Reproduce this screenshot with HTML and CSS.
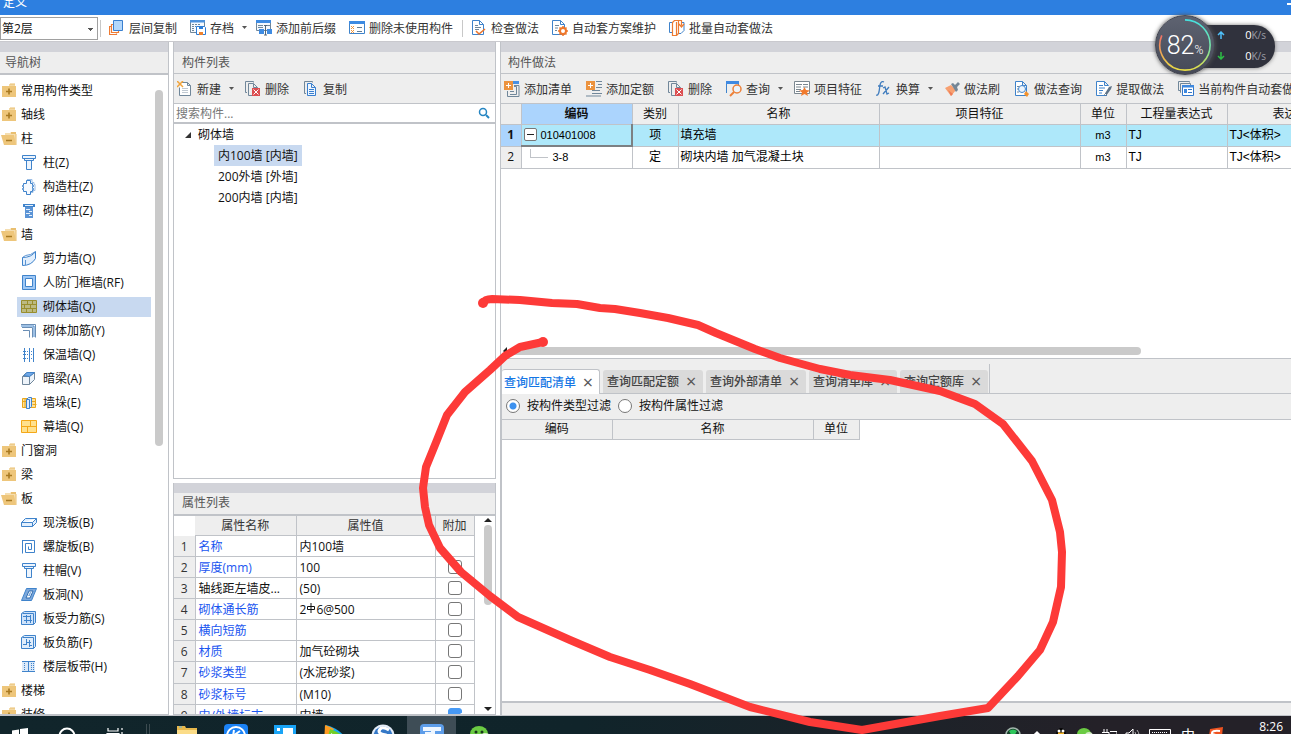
FILE: index.html
```html
<!DOCTYPE html>
<html lang="zh-CN">
<head>
<meta charset="utf-8">
<title>定义</title>
<link rel="stylesheet" href="styles.css">
</head>
<body>
<svg class="sprite" aria-hidden="true">
  <symbol id="folder" viewBox="0 0 16 16"><path d="M8 1h6v3h-6z" fill="#f3d9a4"/><path d="M9 .5h5v1h-5z" fill="#e9bf70"/><path d="M1 3h14v11h-14z" fill="#eec67b"/><path d="M8 5.500v6M5 8.500h6" stroke="#a87a22" stroke-width="1.600"/></symbol>
  <symbol id="open" viewBox="0 0 16 16"><path d="M4 2h5l1-1h5v12h-11z" fill="#f5deb0"/><path d="M10 1h5v2h-5z" fill="#e9bf70"/><path d="M15 3v11" stroke="#e9bf70"/><path d="M0 4h13l2 10h-12z" fill="#eec67b"/><path d="M5 9.500h6" stroke="#a87a22" stroke-width="1.500"/></symbol>
  <symbol id="column" viewBox="0 0 16 16"><path d="M1.500.5h13v3h-13zM3.500 3.500h9v2h-9zM5.500 5.500h5v9h-5z" fill="#eef5fd" stroke="#3f83cb"/></symbol>
  <symbol id="struct" viewBox="0 0 16 16"><path d="M6 .5h5v3h2v2h1v6h-2v2h-2" fill="none" stroke="#9dbfe6"/><path d="M5.500 1.500h4v3h2v2h1v1h-1v2h1v1h-1v2h-2v3h-4v-3h-3v-2h-1v-1h1v-2h-1v-1h1v-2h3z" fill="#f5f9fe" stroke="#3f83cb"/></symbol>
  <symbol id="brickcol" viewBox="0 0 16 16"><path d="M2 1h12v3h-12z" fill="#3f83cb"/><path d="M4 4h8v11h-8z" fill="#5b94d6"/><path d="M5 6.500h4M8 8.500h3M5 10.500h4M8 12.500h3M4 2.500h8" stroke="#e5f0fc"/></symbol>
  <symbol id="curve" viewBox="0 0 16 16"><path d="M1.500 6.500q9 0 13-6v7q-4 7-13 7z" fill="#e2effd" stroke="#3f83cb"/><path d="M1.500 6.500l3-2q5 0 10-4M4.500 9v5" fill="none" stroke="#5a94d4"/></symbol>
  <symbol id="frame" viewBox="0 0 16 16"><path d="M1.500.5h13v14h-13z" fill="#9fc8f5" stroke="#3f83cb"/><path d="M4.500 3.500h7v8h-7z" fill="#fff" stroke="#3f83cb"/></symbol>
  <symbol id="brick" viewBox="0 0 16 16"><path d="M.5 1.500h15v12h-15zM.5 5.500h15M.5 9.500h15M6.500 1.500v4M11.500 1.500v4M3.500 5.500v4M9.500 5.500v4M5.500 9.500v4M11.500 9.500v4" fill="#bcba82" stroke="#998e2d"/></symbol>
  <symbol id="rebar" viewBox="0 0 16 16"><path d="M0 1.500h14.500v13M1 4.500h10.500v10M2 7.500h6.500v7" fill="none" stroke="#6a8eb5"/><path d="M0 3h13v11" fill="none" stroke="#3f83cb"/></symbol>
  <symbol id="insul" viewBox="0 0 16 16"><path d="M3.500 1v14M8.500 1v14M12.500 1v14" stroke="#3f83cb"/><path d="M2 4.500h12M2 7.500h12M2 11.500h12" stroke="#3f83cb" stroke-dasharray="1 1"/></symbol>
  <symbol id="beam" viewBox="0 0 16 16"><path d="M1.500 5.500l4-4h8v7l-5 5h-7zM1.500 5.500h7v8M8.500 5.500l5-4" fill="#eef4fa" stroke="#71879b"/><path d="M3 4.500l3-3h7.500l-5 4z" fill="#72a9e7" stroke="#3f83cb"/></symbol>
  <symbol id="pier" viewBox="0 0 16 16"><path d="M1.500 3.500h13v9h-13zM1 6.500h14M11.500 9.500h4M4 3v10" fill="#ffe19a" stroke="#e9a71b"/><path d="M5.500 4.500l2-2h3v9l-2 2h-3zM5.500 4.500h3v9" fill="#dceaff" stroke="#3f83cb"/></symbol>
  <symbol id="curtain" viewBox="0 0 16 16"><path d="M.5 1.500h15v12h-15zM.5 7.500h15M9.500 1.500v6M6.500 7.500v6" fill="#ffe18e" stroke="#f4a819"/></symbol>
  <symbol id="slab" viewBox="0 0 16 16"><path d="M.5 7.500l4-4h11v4l-4 4h-11zM.5 7.500h11l4-4M11.500 7.500v4" fill="#e1effe" stroke="#3f83cb"/></symbol>
  <symbol id="spiral" viewBox="0 0 16 16"><path d="M1.500 1v13.500M1 1.500h12.500v12h-9v-9h6v6h-3v-3" fill="none" stroke="#3f83cb"/></symbol>
  <symbol id="hole" viewBox="0 0 16 16"><path d="M.5 13.500l5-12h10l-5 12z" fill="#7ca8dc" stroke="#3f83cb"/><path d="M5 11l3-7h4l-3 7z" fill="#fff" stroke="#326fb1"/><path d="M7 9l2-4h1l-1 4z" fill="#7ca8dc"/></symbol>
  <symbol id="barS" viewBox="0 0 16 16"><path d="M3.500.5h11v11l-2 2h-12v-11z" fill="#cfe3fa" stroke="#3f83cb"/><path d="M1.500 2.500h11v11" fill="none" stroke="#3f83cb"/><path d="M2 5.500h8M3 9.500h8M5.500 4v8M9.500 4v8" stroke="#3f83cb"/></symbol>
  <symbol id="barF" viewBox="0 0 16 16"><path d="M3.500.5h11v11l-2 2h-12v-11z" fill="#e0edfb" stroke="#3f83cb"/><path d="M1.500 2.500h11v11M5.500 4v6M8.500 5v7M2 9.500h4M5 7.500h5M8 10.500h3" fill="none" stroke="#3f83cb"/></symbol>
  <symbol id="strip" viewBox="0 0 16 16"><path d="M1 2h13v11H1z" fill="#dbe9f9"/><path d="M1 2.500h13M1 12.500h13M7.500 2v11" stroke="#3f83cb"/><path d="M3.500 4v8M10.500 4v8M12.500 4v8" stroke="#3f83cb" stroke-dasharray="1 1"/></symbol>
  <symbol id="layers" viewBox="0 0 16 16"><path d="M4.500 4.500h-2v8h7v-2M3 6.500H.5v8h7v-1" fill="none" stroke="#ee7b34" stroke-width="1.200"/><path d="M4.500.5h9v10h-9z" fill="#b3d7fb" stroke="#397fcf"/></symbol>
  <symbol id="save" viewBox="0 0 16 16"><path d="M.5.5h14v12H.5z" fill="#f6fafe" stroke="#70879a"/><path d="M0 0h15v2.500H0z" fill="#4e93dd"/><path d="M2 4.500h9M2 6.500h4M2 8.500h3M2 10.500h3" stroke="#70879a" stroke-dasharray="2 1"/><path d="M6.500 6.500h8l1 1v7h-9z" fill="#fff" stroke="#2c7dd7"/><path d="M9 7h4v2H9z" fill="#2c7dd7"/><path d="M9 12h4v3H9z" fill="#ee822f"/></symbol>
  <symbol id="prefix" viewBox="0 0 16 16"><path d="M.5 1.500h14v9H.5z" fill="#f4f8fc" stroke="#70879a"/><path d="M0 0h15v3H0z" fill="#3e8be2"/><path d="M2 5.500h5M2 7.500h5M10 5.500h4" stroke="#70879a"/><path d="M3 9h5v5H3zM11 9h5v5h-5z" fill="#3e8be2"/><path d="M9.500 5v10M8 5.500h3M8 15h3" stroke="#526779"/></symbol>
  <symbol id="unused" viewBox="0 0 16 16"><path d="M.5 1.500h15v12H.5z" fill="#fff" stroke="#3e83cb"/><path d="M0 1h16v3H0z" fill="#3e8be2"/><path d="M2 6l3 3m0-3L2 9m0 1l3 3m0-3l-3 3" stroke="#ef943a"/><path d="M8 7.500h5M8 11.500h5" stroke="#657c91"/></symbol>
  <symbol id="check" viewBox="0 0 16 16"><path d="M1.500.5h7l4 4v10h-11zM8.500.5v4h4" fill="#fff" stroke="#3f83cb"/><path d="M4 5.500h3M4 7.500h6M4 9.500h4" stroke="#70879a"/><path d="M5 11l3 3 6-5" fill="none" stroke="#ec752b" stroke-width="1.600"/></symbol>
  <symbol id="plan" viewBox="0 0 16 16"><path d="M.5.500h8l4 4v10h-12zM8.500.5v4h4" fill="#fff" stroke="#3f83cb"/><path d="M3 5.500h4M3 8h3M3 10.500h2" stroke="#70879a"/><circle cx="11" cy="11" r="3" fill="#fff" stroke="#ef772a" stroke-width="2"/><path d="M11 6v2M11 14v2M6 11h2M14 11h2M7.500 7.500L9 9M13 13l1.500 1.500M7.500 14.500L9 13M13 9l1.500-1.500" stroke="#ef772a" stroke-width="1.500"/></symbol>
  <symbol id="batch" viewBox="0 0 16 16"><path d="M3.500 2.500h-3v10h3M12 2.500h3v8l-3 3H9" fill="none" stroke="#3f83cb"/><path d="M3.500 2.500l2-2h4v13l-2 2h-4zM7.500 2v13M9.500.5h3v5M10 4l2.500 3L15 4" fill="none" stroke="#ed7b31" stroke-width="1.200"/></symbol>
  <symbol id="new" viewBox="0 0 16 16"><path d="M4.500 1.500h6l3 3v10h-11v-8M10.500 1.500v3h3" fill="#fff" stroke="#70879a"/><path d="M5 7.500h6M5 9.500h6M5 11.500h6" stroke="#c0c9d2"/><path d="M0 0l6 6m0-6L0 6" stroke="#f2a43b" stroke-width="1.500"/></symbol>
  <symbol id="delete" viewBox="0 0 16 16"><path d="M2 11.500H.5V.5h8v1M8 14.500H3.500v-12h5l4 4v1M8.500 2.500v4h4" fill="none" stroke="#71879a"/><path d="M7 7h8v8H7z" fill="#dc4e51"/><path d="M8.500 8.500l5 5m0-5l-5 5" stroke="#fff"/></symbol>
  <symbol id="copy" viewBox="0 0 16 16"><path d="M3 12.500H1.500V.5h8v1" fill="none" stroke="#70879a"/><path d="M4.500 2.500h4l4 4v8h-8zM8.500 2.500v4h4M6 8.500h5M6 10.500h5M6 12.500h5" fill="#eef6ff" stroke="#397fcf"/></symbol>
  <symbol id="addlist" viewBox="0 0 16 16"><path d="M10 1.500h5M10 4.500h5v11H3.500V10" fill="none" stroke="#70879a"/><path d="M9 0h6v3H9z" fill="#4790e4"/><path d="M10 5.500h2.500v8H6M6 10.500h4" fill="none" stroke="#70879a"/><path d="M0 0h9v9H0z" fill="#ec933f"/><path d="M4.500 2v5M2 4.500h5" stroke="#fff"/></symbol>
  <symbol id="addquota" viewBox="0 0 16 16"><path d="M10 .5h6M12 3.500h4M10 6.500h6M6 9.500h8M6 12.500h10M0 15h15" stroke="#70879a"/><path d="M0 0h9v9H0z" fill="#ec933f"/><path d="M4.500 2v5M2 4.500h5" stroke="#fff"/></symbol>
  <symbol id="query" viewBox="0 0 16 16"><path d="M.5 12V.5h12V4" fill="none" stroke="#3f83cb"/><path d="M0 0h13v3H0z" fill="#3f8ae2"/><circle cx="11" cy="8" r="4" fill="#edf4fa" stroke="#ed8139" stroke-width="1.500"/><path d="M8 11l-4 4" stroke="#ed8139" stroke-width="2"/></symbol>
  <symbol id="feature" viewBox="0 0 16 16"><path d="M.5.5h15v12H.5z" fill="#fff" stroke="#7b8790"/><path d="M2 3.500h6M9 3.500h5M2 6h5M9 6h5M2 8.500h5M2 10.500h4" stroke="#7b8790"/><path d="M10.500 6l1.500 3 4 .5-3 2 1 3.500-3.500-2L7 15l1-3.500-3-2 4-.5z" fill="#f17a2d"/></symbol>
  <symbol id="fx" viewBox="0 0 16 16"><path d="M8 1Q5-.5 4 4L3 11Q2 15 0 14M2 5h5M7 7l2-1 2 7 2-1M13 6L7 13" fill="none" stroke="#417dbe" stroke-width="1.300"/></symbol>
  <symbol id="brush" viewBox="0 0 16 16"><path d="M1 7l6-3 5 5-5 6z" fill="#f7a071"/><path d="M7 3l2-1 2 2 3-3 2 2-3 3 1 3-2 2z" fill="#748696"/><path d="M4 9l3 6 2-2" fill="#ef7c57"/></symbol>
  <symbol id="docquery" viewBox="0 0 16 16"><path d="M1.500.5h7l4 4v10h-11zM8.500.5v4h4" fill="#fff" stroke="#3f83cb"/><circle cx="8" cy="8" r="3.500" fill="#edf5fd" stroke="#3f83cb"/><path d="M3 5.500h2M3 8h1M3 11h2" stroke="#70879a"/><path d="M12 10l3 3-2 3-3-3z" fill="#f3922d"/></symbol>
  <symbol id="extract" viewBox="0 0 16 16"><path d="M11 14.500H.5V.5h8l4 4M8.500.5v4h4" fill="#fff" stroke="#3f83cb"/><path d="M3 4.500h4M3 7h6M3 9.500h4M3 12h3" stroke="#3f83cb"/><path d="M8 14l5-8 3-1-1 3-5 7z" fill="#5e7388"/><path d="M8 12l2 2" stroke="#fff"/></symbol>
  <symbol id="current" viewBox="0 0 16 16"><path d="M3 9.500H.5V.5h11v1M3 11.500h-.5v-9h10V4" fill="none" stroke="#70879a"/><path d="M4.500 4.500h11v10h-11z" fill="#fff" stroke="#3478ca"/><path d="M4 4h12v2.500H4zM6 8h3v4H6z" fill="#3d88df"/><path d="M10 8.500h4M10 11.500h4" stroke="#3478ca"/></symbol>
  <symbol id="arrow" viewBox="0 0 7 4"><path d="M1 0h5L3.500 3z" fill="#555"/></symbol>
</svg>

<div class="window">
  <header class="titlebar"><span>定义</span><button class="minimise" aria-label="最小化"></button></header>

  <div class="main-tools">
    <select class="floor" aria-label="楼层"><option>第2层</option></select>
    <i class="sep"></i>
    <button class="tool"><svg><use href="#layers"/></svg>层间复制</button>
    <button class="tool drop"><svg><use href="#save"/></svg>存档<svg class="arrow"><use href="#arrow"/></svg></button>
    <button class="tool"><svg><use href="#prefix"/></svg>添加前后缀</button>
    <button class="tool"><svg><use href="#unused"/></svg>删除未使用构件</button>
    <i class="sep"></i>
    <button class="tool"><svg><use href="#check"/></svg>检查做法</button>
    <button class="tool"><svg><use href="#plan"/></svg>自动套方案维护</button>
    <button class="tool"><svg><use href="#batch"/></svg>批量自动套做法</button>
  </div>

  <main class="workspace">
    <nav class="nav-panel">
      <h2 class="heading thick">导航树</h2>
      <div class="nav-body">
        <ul class="nav-tree">
          <li><svg><use href="#folder"/></svg>常用构件类型</li>
          <li><svg><use href="#folder"/></svg>轴线</li>
          <li><svg><use href="#open"/></svg>柱</li>
          <li class="leaf"><svg><use href="#column"/></svg>柱(Z)</li>
          <li class="leaf"><svg><use href="#struct"/></svg>构造柱(Z)</li>
          <li class="leaf"><svg><use href="#brickcol"/></svg>砌体柱(Z)</li>
          <li><svg><use href="#open"/></svg>墙</li>
          <li class="leaf"><svg><use href="#curve"/></svg>剪力墙(Q)</li>
          <li class="leaf"><svg><use href="#frame"/></svg>人防门框墙(RF)</li>
          <li class="leaf selected"><svg><use href="#brick"/></svg>砌体墙(Q)</li>
          <li class="leaf"><svg><use href="#rebar"/></svg>砌体加筋(Y)</li>
          <li class="leaf"><svg><use href="#insul"/></svg>保温墙(Q)</li>
          <li class="leaf"><svg><use href="#beam"/></svg>暗梁(A)</li>
          <li class="leaf"><svg><use href="#pier"/></svg>墙垛(E)</li>
          <li class="leaf"><svg><use href="#curtain"/></svg>幕墙(Q)</li>
          <li><svg><use href="#folder"/></svg>门窗洞</li>
          <li><svg><use href="#folder"/></svg>梁</li>
          <li><svg><use href="#open"/></svg>板</li>
          <li class="leaf"><svg><use href="#slab"/></svg>现浇板(B)</li>
          <li class="leaf"><svg><use href="#spiral"/></svg>螺旋板(B)</li>
          <li class="leaf"><svg><use href="#column"/></svg>柱帽(V)</li>
          <li class="leaf"><svg><use href="#hole"/></svg>板洞(N)</li>
          <li class="leaf"><svg><use href="#barS"/></svg>板受力筋(S)</li>
          <li class="leaf"><svg><use href="#barF"/></svg>板负筋(F)</li>
          <li class="leaf"><svg><use href="#strip"/></svg>楼层板带(H)</li>
          <li><svg><use href="#folder"/></svg>楼梯</li>
          <li><svg><use href="#folder"/></svg>装修</li>
        </ul>
        <div class="nav-scroll"><i></i></div>
      </div>
    </nav>

    <div class="middle">
      <section class="list-panel">
        <h2 class="heading">构件列表</h2>
        <div class="tools">
          <button class="tool drop"><svg><use href="#new"/></svg>新建<svg class="arrow"><use href="#arrow"/></svg></button>
          <button class="tool"><svg><use href="#delete"/></svg>删除</button>
          <button class="tool"><svg><use href="#copy"/></svg>复制</button>
        </div>
        <div class="search">
          <input type="text" aria-label="搜索构件" placeholder="搜索构件...">
          <svg viewBox="0 0 12 12"><circle cx="5" cy="5" r="3.500" fill="none" stroke="#2585c2" stroke-width="1.500"/><path d="M8 8l3 3" stroke="#2585c2" stroke-width="2"/></svg>
        </div>
        <ul class="parts">
          <li class="root"><svg viewBox="0 0 8 8"><path d="M7 1v6H1z" fill="#333"/></svg>砌体墙</li>
          <li><span class="selected">内100墙 [内墙]</span></li>
          <li><span>200外墙 [外墙]</span></li>
          <li><span>200内墙 [内墙]</span></li>
        </ul>
      </section>

      <section class="prop-panel">
        <h2 class="heading thick">属性列表</h2>
        <div class="prop-body">
          <table class="props">
            <thead><tr><th class="n"></th><th class="name">属性名称</th><th class="value">属性值</th><th class="extra">附加</th></tr></thead>
            <tbody>
              <tr><th>1</th><td class="link">名称</td><td>内100墙</td><td></td></tr>
              <tr><th>2</th><td class="link">厚度(mm)</td><td>100</td><td><input type="checkbox" aria-label="附加 厚度"></td></tr>
              <tr><th>3</th><td>轴线距左墙皮...</td><td>(50)</td><td><input type="checkbox" aria-label="附加 轴线距左墙皮"></td></tr>
              <tr><th>4</th><td class="link">砌体通长筋</td><td>2<svg class="bar" viewBox="0 0 10 11" role="img" aria-label="钢筋"><path d="M1.500 3.500h7v3h-7zM5 0v10" fill="none" stroke="#111"/></svg>6@500</td><td><input type="checkbox" aria-label="附加 砌体通长筋"></td></tr>
              <tr><th>5</th><td class="link">横向短筋</td><td></td><td><input type="checkbox" aria-label="附加 横向短筋"></td></tr>
              <tr><th>6</th><td class="link">材质</td><td>加气砼砌块</td><td><input type="checkbox" aria-label="附加 材质"></td></tr>
              <tr><th>7</th><td class="link">砂浆类型</td><td>(水泥砂浆)</td><td><input type="checkbox" aria-label="附加 砂浆类型"></td></tr>
              <tr><th>8</th><td class="link">砂浆标号</td><td>(M10)</td><td><input type="checkbox" aria-label="附加 砂浆标号"></td></tr>
              <tr><th>9</th><td class="link">内/外墙标志</td><td>内墙</td><td><input type="checkbox" checked aria-label="附加 内/外墙标志"></td></tr>
            </tbody>
          </table>
          <div class="prop-scroll">
            <svg viewBox="0 0 8 4"><path d="M0 4l4-4 4 4z" fill="#222"/></svg>
            <i></i>
            <svg viewBox="0 0 8 4"><path d="M0 0l4 4 4-4z" fill="#222"/></svg>
          </div>
        </div>
      </section>
    </div>

    <div class="right">
      <section class="method-panel">
        <h2 class="heading">构件做法</h2>
        <div class="tools">
          <button class="tool"><svg><use href="#addlist"/></svg>添加清单</button>
          <button class="tool"><svg><use href="#addquota"/></svg>添加定额</button>
          <button class="tool"><svg><use href="#delete"/></svg>删除</button>
          <button class="tool drop"><svg><use href="#query"/></svg>查询<svg class="arrow"><use href="#arrow"/></svg></button>
          <button class="tool"><svg><use href="#feature"/></svg>项目特征</button>
          <button class="tool drop"><svg><use href="#fx"/></svg>换算<svg class="arrow"><use href="#arrow"/></svg></button>
          <button class="tool"><svg><use href="#brush"/></svg>做法刷</button>
          <button class="tool"><svg><use href="#docquery"/></svg>做法查询</button>
          <button class="tool"><svg><use href="#extract"/></svg>提取做法</button>
          <button class="tool"><svg><use href="#current"/></svg>当前构件自动套做法</button>
        </div>
        <table class="methods">
          <colgroup><col class="w21"><col class="w111"><col class="w46"><col class="w201"><col class="w201"><col class="w46"><col class="w101"><col class="w151"></colgroup>
          <thead><tr><th></th><th class="active">编码</th><th>类别</th><th>名称</th><th>项目特征</th><th>单位</th><th>工程量表达式</th><th>表达式说明</th></tr></thead>
          <tbody>
            <tr class="current"><th>1</th><td class="code"><div><button class="fold" aria-label="折叠"></button>010401008</div></td><td class="mid">项</td><td>填充墙</td><td></td><td class="mid small">m3</td><td>TJ</td><td>TJ&lt;体积&gt;</td></tr>
            <tr><th>2</th><td class="code"><div><i class="branch"></i>3-8</div></td><td class="mid">定</td><td>砌块内墙 加气混凝土块</td><td></td><td class="mid small">m3</td><td>TJ</td><td>TJ&lt;体积&gt;</td></tr>
          </tbody>
        </table>
        <div class="h-scroll"><svg viewBox="0 0 4 8"><path d="M4 0v8L0 4z" fill="#222"/></svg><i></i></div>
      </section>

      <section class="query-panel">
        <div class="tabs" role="tablist">
          <button class="tab on" role="tab" aria-selected="true">查询匹配清单<b>×</b></button>
          <button class="tab" role="tab">查询匹配定额<b>×</b></button>
          <button class="tab" role="tab">查询外部清单<b>×</b></button>
          <button class="tab" role="tab">查询清单库<b>×</b></button>
          <button class="tab" role="tab">查询定额库<b>×</b></button>
        </div>
        <div class="filters">
          <label><input type="radio" name="filter" checked>按构件类型过滤</label>
          <label><input type="radio" name="filter">按构件属性过滤</label>
        </div>
        <div class="results">
          <table class="result-table">
            <thead><tr><th class="w111">编码</th><th class="w201">名称</th><th class="w46">单位</th></tr></thead>
          </table>
        </div>
        <div class="status"></div>
      </section>
    </div>
  </main>

  <footer class="taskbar">
    <div class="system">
      <button aria-label="开始"><svg viewBox="0 0 18 18"><path d="M1 3.500l7-1v6H1zM9 2l8-1v7.500H9zM1 9.500h7v6l-7-1zM9 9.500h8V17l-8-1z" fill="#fff"/></svg></button>
      <button aria-label="搜索"><svg viewBox="0 0 18 18"><circle cx="9" cy="9" r="7.500" fill="none" stroke="#fff" stroke-width="2"/></svg></button>
      <button aria-label="任务视图"><svg viewBox="0 0 18 18"><path d="M2 1v3h10V1M2 17v-3h10v3M1 6.500h12v5H1zM16 1v2M16 5v7M16 14v3" fill="none" stroke="#fff" stroke-width="1.200"/></svg></button>
    </div>
    <i class="grip"></i>
    <div class="apps">
      <button aria-label="文件资源管理器"><svg viewBox="0 0 24 24"><path d="M2 2h8l1 2h11v18H2z" fill="#e7b84c"/><path d="M2 6h20v16H2z" fill="#fbdc88"/><path d="M4 3h3" stroke="#5fb2df"/></svg></button>
      <button aria-label="酷狗"><svg viewBox="0 0 24 24"><rect width="24" height="24" rx="4" fill="#1b82f5"/><circle cx="12" cy="12" r="9" fill="none" stroke="#fff" stroke-width="2"/><path d="M10 6L8 18M16 7l-7 5 5 6" fill="none" stroke="#fff" stroke-width="2"/></svg></button>
      <button aria-label="桌面工具"><svg viewBox="0 0 24 24"><path d="M1 1h22v22H1z" fill="#19a4f6"/><path d="M4 4h3v3H4zM10 4h10v10H10zM4 10h3v3H4z" fill="#fff"/></svg></button>
      <button aria-label="播放器"><svg viewBox="0 0 24 24"><path d="M4 1q12 3 19 12L4 22z" fill="#18aaf0"/><path d="M3 1q6 2 9 4L2 20z" fill="#ff9c22"/><path d="M8 5q9 3 14 8L3 23z" fill="#73cf27"/><path d="M9 9l6 4-6 4z" fill="#fff"/></svg></button>
      <button aria-label="浏览器"><svg viewBox="0 0 24 24"><circle cx="12" cy="12" r="11.500" fill="#e4edf8"/><circle cx="12" cy="12" r="9.500" fill="#3478c7"/><path d="M18 6Q10 1 8 7q0 3 7 4 5 3 0 7-4 2-9-1" fill="none" stroke="#fff" stroke-width="3"/></svg></button>
      <button class="running" aria-label="定义"><svg viewBox="0 0 24 24"><rect width="24" height="24" rx="4" fill="#5d9de9"/><path d="M3 5h18M13 5v14M5 10h7" stroke="#eef6ff" stroke-width="4"/></svg></button>
      <button aria-label="微信"><svg viewBox="0 0 24 24"><ellipse cx="10" cy="10" rx="9" ry="8" fill="#6bcb43"/><ellipse cx="16" cy="15" rx="7" ry="6" fill="#d6edc9"/><circle cx="7" cy="8" r="1.500" fill="#17351b"/><circle cx="13" cy="8" r="1.500" fill="#17351b"/></svg></button>
    </div>
    <div class="tray">
      <svg viewBox="0 0 16 16"><circle cx="8" cy="8" r="7" fill="#173f2b" stroke="#a2b6ac" stroke-width="1.500"/><path d="M4 4q4-3 8 0l-4 7z" fill="#2ec65b"/></svg>
      <svg viewBox="0 0 16 16"><path d="M4 9l4-4 4 4" fill="none" stroke="#fff" stroke-width="1.500"/></svg>
      <svg viewBox="0 0 16 16"><ellipse cx="8" cy="8" rx="5" ry="7" fill="#050505"/><circle cx="6" cy="4" r="1.500" fill="#fff"/><circle cx="10" cy="4" r="1.500" fill="#fff"/><path d="M5 6.500h6" stroke="#f2b227" stroke-width="2"/></svg>
      <svg viewBox="0 0 16 16"><ellipse cx="7" cy="7" rx="7" ry="6" fill="#6bcb43"/><ellipse cx="12" cy="9" rx="4" ry="4" fill="#d6edc9"/></svg>
      <svg viewBox="0 0 16 16"><path d="M3 2v4M6 2v4M1 5.500h7v5M9 4.500h7v8H3" fill="none" stroke="#fff"/></svg>
      <svg viewBox="0 0 16 16"><path d="M1 6h3l4-4v12l-4-4H1z" fill="none" stroke="#fff"/><path d="M10 5q2 3 0 6M12 3q4 5 0 10" fill="none" stroke="#aaa"/></svg>
      <svg class="wide" viewBox="0 0 22 16"><path d="M.5 2.500h21v12H.5z" fill="none" stroke="#fff"/><path d="M3 5.500h16M3 8.500h16M6 12h10" stroke="#fff" stroke-dasharray="1 1"/></svg>
      <span class="ime">中</span>
      <svg class="wide" viewBox="0 0 22 16"><path d="M5 2l13-2-2 17H3z" fill="#ef5421"/><path d="M15 4q-9-1-8 3 6 1 6 4-2 2-6 1" fill="none" stroke="#fff" stroke-width="2"/></svg>
      <time>8:26</time>
    </div>
  </footer>

  <aside class="monitor">
    <div class="rates">
      <p><svg viewBox="0 0 8 8"><path d="M4 8V1M1 4l3-3 3 3" fill="none" stroke="#4fc0fa" stroke-width="1.500"/></svg><span>0<small>K/s</small></span></p>
      <p><svg viewBox="0 0 8 8"><path d="M4 0v7M1 4l3 3 3-3" fill="none" stroke="#2cbf45" stroke-width="1.500"/></svg><span>0<small>K/s</small></span></p>
    </div>
    <div class="gauge">
      <svg viewBox="0 0 60 60">
        <defs><linearGradient id="ring" x1="0" y1="0" x2="0" y2="1"><stop offset="0" stop-color="#45e0df"/><stop offset=".6" stop-color="#7ee39c"/><stop offset="1" stop-color="#e8dd45"/></linearGradient><linearGradient id="ring2" x1="0" y1="0" x2="0" y2="1"><stop offset="0" stop-color="#f06f66"/><stop offset="1" stop-color="#e8dd45"/></linearGradient></defs>
        <path d="M30 4a26 26 0 0 1 0 52" fill="none" stroke="url(#ring)" stroke-width="1.700"/>
        <path d="M30 56A26 26 0 0 1 6 20" fill="none" stroke="url(#ring2)" stroke-width="1.700"/>
      </svg>
      <span>82<small>%</small></span>
    </div>
  </aside>

  <svg class="ink" width="1291" height="734" viewBox="0 0 1291 734" aria-hidden="true"><path d="M483 303Q485 299 492 299L520 300L552 303L577 304L600 308L615 309L640 313L668 318L698 325L716 333L755 349L780 358L820 369L850 375L890 380L940 391L975 404L1003 424L1032 461L1052 500L1060 532L1062 552L1061 587L1053 622L1040 650L1018 676L988 708L940 716L862 730L810 722L750 707L690 684L650 670L610 657L570 640L518 617L490 596L461 572L440 548L429 525L425 507L423 488L426 467L437 440L447 415L465 392L490 370L505 356L520 347L543 342"/><circle cx="483" cy="303" r="5"/><circle cx="543" cy="342" r="5"/></svg>
</div>
</body>
</html>
```

FILE: styles.css
```css
* { box-sizing: border-box; }
html, body { height: 100%; margin: 0; }
body, button, input, select { font-family: "Open Sans", "Noto Sans CJK SC", sans-serif; font-size: 12px; color: #111; }
body { line-height: 16px; }
button { border: 0; padding: 0; background: none; }
h2, p, ul { margin: 0; padding: 0; list-style: none; font-weight: 400; }
svg { display: block; flex: none; }
.sprite { position: absolute; width: 0; height: 0; }

.window { position: relative; display: flex; flex-direction: column; height: 100vh; overflow: hidden; background: #fff; }

.titlebar { display: flex; justify-content: space-between; flex: none; height: 15px; padding-left: 3px; overflow: hidden; background: #2d7fe0; color: #fff; }
.titlebar span { line-height: 6px; }
.minimise { width: 4px; height: 5px; border-bottom: 2px solid #fff; }

.main-tools { display: flex; align-items: center; flex: none; height: 27px; gap: 1px; overflow: hidden; border-bottom: 1px solid #c9c9ce; background: #fff; }
.floor { width: 98px; height: 23px; padding: 0 0 0 1px; border: 1px solid #a0a0a0; border-radius: 0; appearance: none; background: linear-gradient(#555, #555) 87px 10px / 5px 1px no-repeat, linear-gradient(#555, #555) 88px 11px / 3px 1px no-repeat, linear-gradient(#555, #555) 89px 12px / 1px 1px no-repeat #fff; }
.sep { width: 1px; height: 17px; margin: 0 1px; background: #c8c8c8; }
.tool { display: flex; align-items: center; flex: none; gap: 4px; color: #333; white-space: nowrap; }
.tool svg { width: 16px; height: 16px; }
.tool svg.arrow { width: 7px; height: 4px; margin-left: 3px; }
.main-tools .tool { height: 21px; padding: 0 6px; }
.main-tools .drop { padding-right: 1px; }
.main-tools .tool + .sep { margin-left: 2px; }

.workspace { display: flex; flex: 1; min-height: 0; gap: 4px; }
.heading { display: flex; align-items: center; flex: none; height: 32px; padding: 0 8px; border-top: 10px solid #d2d3d9; border-bottom: 1px solid #c0c3c8; background: #eee; color: #555; font-size: 12px; }
.heading.thick { height: 33px; border-bottom-width: 2px; }
.tools { display: flex; align-items: center; flex: none; height: 30px; gap: 14px; padding: 0 3px; overflow: hidden; border-bottom: 1px solid #c0c3c8; background: #eee; }
.tools .drop { margin-right: -4px; }

.nav-panel { display: flex; flex-direction: column; flex: none; width: 169px; border-right: 1px solid #c0c3c8; border-bottom: 1px solid #c0c3c8; }
.nav-panel .heading { padding-left: 5px; }
.nav-body { display: flex; flex: 1; min-height: 0; padding-top: 4px; overflow: hidden; }
.nav-tree { flex: 1; }
.nav-tree li { display: flex; align-items: center; height: 24px; gap: 4px; padding-left: 1px; white-space: nowrap; }
.nav-tree svg { width: 16px; height: 16px; }
.nav-tree .leaf { height: 20px; margin: 2px 0 2px 17px; gap: 6px; padding-left: 4px; }
.nav-tree .leaf + .leaf { margin-top: 4px; }
.nav-tree .selected { background: #c8d9f0; }
.nav-scroll { flex: none; width: 17px; padding: 11px 5px 0 4px; }
.nav-scroll i { display: block; height: 356px; border-radius: 4px; background: #cacaca; }

.middle { display: flex; flex-direction: column; flex: none; width: 323px; gap: 4px; }
.list-panel { display: flex; flex-direction: column; flex: 437 1 0; min-height: 0; border: solid #c0c3c8; border-width: 0 1px 1px; }
.search { display: flex; align-items: center; flex: none; height: 20px; padding: 0 5px 0 2px; border-bottom: 2px solid #c0c3c8; }
.search input { flex: 1; min-width: 0; padding: 0; border: 0; outline: 0; }
.search input::placeholder { color: #777; }
.search svg { width: 12px; height: 12px; }
.parts li { display: flex; align-items: center; height: 21px; padding-left: 40px; }
.parts .root { gap: 6px; padding-left: 10px; }
.parts svg { width: 8px; height: 8px; }
.parts span { height: 21px; padding: 0 4px; line-height: 21px; }
.parts .selected { background: #c8d9f0; }

.prop-panel { display: flex; flex-direction: column; flex: 232 1 0; min-height: 0; overflow: hidden; border: solid #c0c3c8; border-width: 0 1px 1px; }
.prop-body { display: flex; flex: 1; min-height: 0; overflow: hidden; }
table { border-collapse: collapse; table-layout: fixed; }
th, td { padding: 0; font-weight: 400; line-height: 16px; white-space: nowrap; overflow: hidden; }
.props { flex: none; width: 300px; height: 210px; }
.props tr { height: 21px; }
.props thead tr { height: 20px; }
.props th, .props td { padding-top: 2px; border: solid #c0c3c8; border-width: 0 1px 1px 0; }
.props th { background: #eee; color: #333; }
.props thead .n { width: 21px; background: #fff; border: 0; }
.props .name { width: 101px; }
.props .value { width: 139px; }
.props .extra { width: 39px; }
.props td { padding-left: 3px; }
.props td:last-child { padding: 0; }
.props .link { color: #1a56f0; }
.bar { display: inline-block; width: 10px; height: 11px; }
input[type="checkbox"] { display: block; width: 14px; height: 14px; margin: 0 auto; border: 1px solid #777; border-radius: 3px; appearance: none; background: #fff; }
input[type="checkbox"]:checked { border-color: #4699f5; background: #4699f5; }
input[type="checkbox"]:checked::after { display: block; width: 5px; height: 9px; margin: 1px 0 0 4px; border: solid #fff; border-width: 0 2px 2px 0; transform: rotate(45deg); content: ""; }
.prop-scroll { display: flex; flex-direction: column; align-items: center; flex: 1; padding: 2px 0 3px 6px; }
.prop-scroll svg { width: 8px; height: 4px; }
.prop-scroll i { width: 8px; height: 80px; margin: 3px 0 auto; border-radius: 4px; background: #cacaca; }

.right { display: flex; flex-direction: column; flex: 1; min-width: 0; border-left: 1px solid #c0c3c8; }
.right .heading { padding-left: 7px; }
.method-panel { display: flex; flex-direction: column; flex: 316 1 0; min-height: 0; overflow: hidden; border-bottom: 1px solid #c0c3c8; }
.methods { width: 877px; flex: none; }
.methods tr { height: 22px; }
.methods thead tr { height: 20px; }
.methods th, .methods td { border: solid #c0c3c8; border-width: 0 1px 1px 0; }
.methods th { background: #eee; }
.methods td { padding-left: 2px; font-family: "Liberation Sans", "Noto Sans CJK SC", sans-serif; color: #000; }
.methods .mid { padding: 0; text-align: center; }
.methods .small { font-size: 11px; }
.methods thead .active { background: #abd4fd; font-weight: 700; }
.current td { background: #aee8fa; }
.methods .current th { background: #abd4fd; font-weight: 700; }
.methods .code { font-size: 11px; }
.methods .current .code { border-right: 2px solid #7c8083; border-bottom: 2px solid #7c8083; }
.code div { display: flex; align-items: center; }
.fold { display: flex; align-items: center; justify-content: center; width: 13px; height: 13px; margin-right: 4px; border: 1px solid #777; border-radius: 2px; background: #fff; }
.fold::after { width: 7px; height: 1px; background: #222; content: ""; }
.branch { align-self: flex-start; width: 18px; height: 9px; margin: 0 5px 0 6px; border: solid #c0c3c8; border-width: 0 0 1px 1px; }
.w21 { width: 20px; }
.w46 { width: 46px; }
.w101 { width: 101px; }
.w111 { width: 111px; }
.w151 { width: 151px; }
.w201 { width: 201px; }
.h-scroll { display: flex; align-items: center; height: 14px; margin-top: auto; gap: 4px; padding-left: 2px; }
.h-scroll svg { width: 4px; height: 8px; }
.h-scroll i { width: 80%; height: 8px; border-radius: 4px; background: #cacaca; }

.query-panel { display: flex; flex-direction: column; flex: 357 1 0; min-height: 0; border-left: 1px solid #c0c3c8; background: #eee; }
.tabs { display: flex; align-items: flex-end; flex: none; height: 35px; gap: 3px; padding-top: 5px; border-bottom: 1px solid #c0c3c8; }
.tabs::after { align-self: stretch; width: 1px; margin-left: -2px; background: #c0c3c8; content: ""; }
.tab { display: flex; align-items: center; flex: none; height: 23px; gap: 6px; padding: 0 6px 0 4px; border-radius: 3px 3px 0 0; background: #dadada; color: #444; font-weight: 500; }
.tab b { width: 12px; color: #555; font-size: 18px; font-weight: 400; line-height: 16px; }
.tab.on { height: 25px; padding: 0 5px 0 2px; margin-bottom: -1px; border: solid #c0c3c8; border-width: 1px 1px 0 0; background: #fff; color: #1677e5; }
.filters { display: flex; align-items: center; flex: none; height: 26px; gap: 7px; padding-left: 4px; border-bottom: 1px solid #c0c3c8; }
.filters label { display: flex; align-items: center; gap: 7px; }
input[type="radio"] { width: 14px; height: 14px; margin: 0; border: 1px solid #777; border-radius: 50%; appearance: none; background: #fff; }
input[type="radio"]:checked { background: radial-gradient(#3d91ef 0 3px, #fff 4px); }
.results { flex: 1; min-height: 0; border-bottom: 2px solid #c0c3c8; background: #fff; }
.result-table { width: 357px; height: 20px; }
.result-table .w111 { width: 110px; }
.result-table th { border: solid #c0c3c8; border-width: 0 1px 1px 0; background: #eee; }
.status { flex: none; height: 12px; }

.taskbar { display: flex; align-items: flex-start; flex: none; height: 19px; overflow: hidden; border-top: 1px solid #c0c3c8; background: linear-gradient(90deg, #11252b, #10242a 45%, #242128 85%); color: #fff; }
.taskbar button { display: flex; align-items: center; justify-content: center; height: 40px; }
.system { display: flex; flex: none; margin-right: 7px; }
.system button { width: 48px; }
.system button:first-child { width: 43px; padding-right: 4px; }
.system svg { width: 18px; height: 18px; }
.grip { width: 4px; height: 40px; margin: 8px 12px 0 0; border: solid #3c4b50; border-width: 0 1px; }
.apps { display: flex; flex: none; }
.apps button { width: 49px; }
.apps svg { width: 24px; height: 24px; }
.apps .running { background: #3e4d56; }
.tray { display: flex; align-items: center; height: 38px; gap: 8px; margin-left: auto; }
.tray svg { width: 16px; height: 16px; }
.tray svg.wide { width: 22px; }
.ime { width: 18px; font-size: 14px; text-align: center; }
.tray time { align-self: flex-start; width: 56px; margin-top: 3px; padding-right: 8px; text-align: right; }

.monitor { position: absolute; top: 15px; right: 16px; display: flex; align-items: center; width: 120px; height: 60px; }
.gauge { position: absolute; left: 0; top: 0; width: 60px; height: 60px; border: 1px solid #444650; border-radius: 50%; background: linear-gradient(#5e6371, #454957); box-shadow: 0 0 4px #555; color: #fff; }
.gauge svg { width: 58px; height: 58px; }
.gauge span { position: absolute; left: 0; right: 0; top: 16px; font-family: Roboto, sans-serif; font-size: 25px; font-weight: 300; line-height: 28px; text-align: center; }
.gauge small { font-size: 12px; }
.rates { width: 75px; height: 43px; margin: 2px 0 0 auto; padding: 0 9px 0 17px; border-radius: 0 21px 21px 0; background: #30323d; box-shadow: 0 0 4px #777; color: #fff; }
.rates p { display: flex; align-items: center; justify-content: space-between; height: 21px; font-size: 11px; }
.rates svg { width: 8px; height: 8px; }
.rates small { color: #9b9ca5; font-size: 10px; }

.ink { position: absolute; left: 0; top: 0; pointer-events: none; }
.ink path { fill: none; stroke: #fd3a38; stroke-width: 8; stroke-linecap: round; stroke-linejoin: round; }
.ink circle { fill: #fd3a38; }
```
